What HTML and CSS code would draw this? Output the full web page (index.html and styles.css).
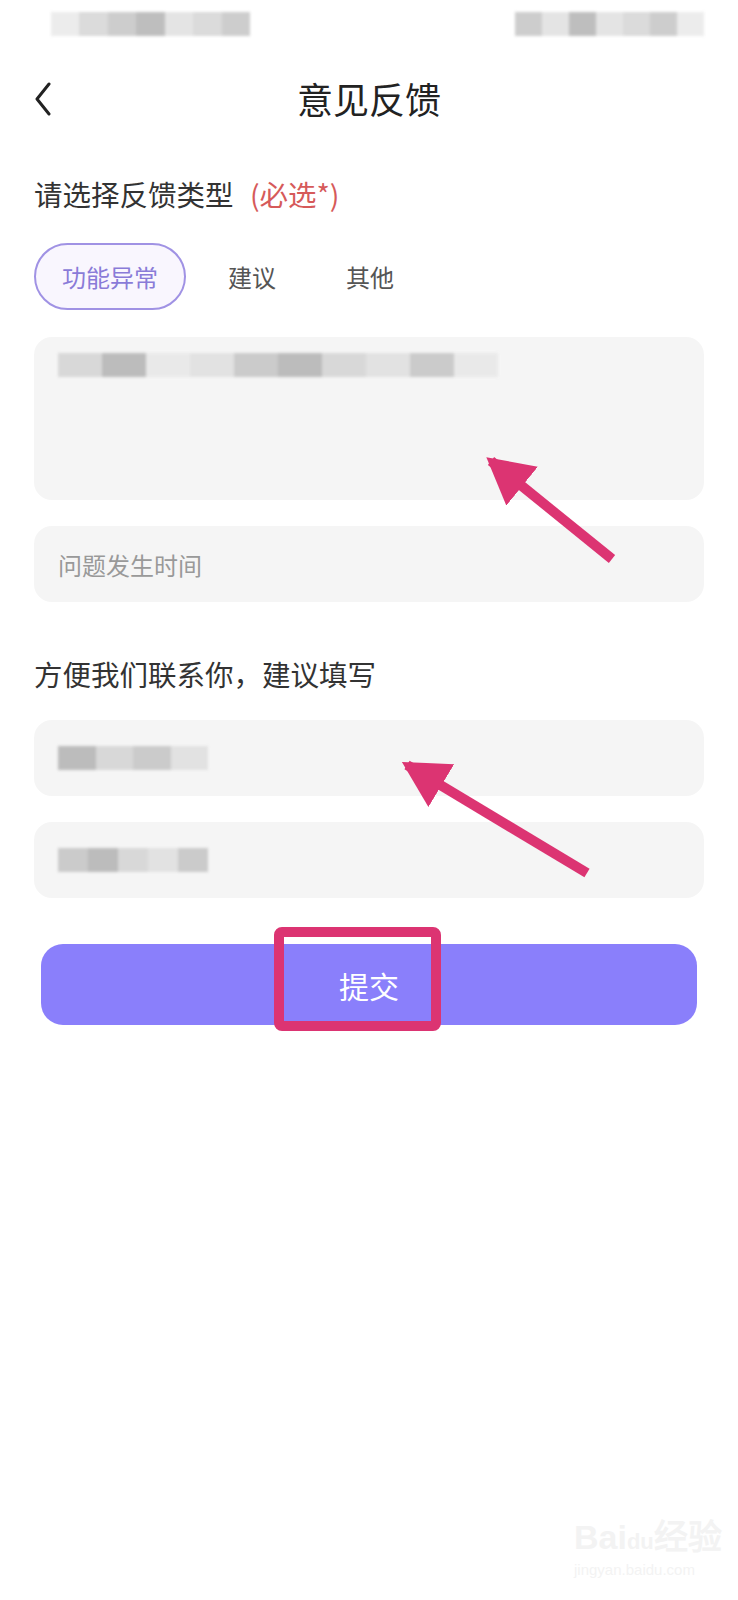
FILE: index.html
```html
<!DOCTYPE html>
<html lang="zh-CN">
<head>
    <meta charset="UTF-8">
    <meta name="viewport" content="width=device-width, initial-scale=1.0">
    <title>意见反馈</title>
    <link rel="stylesheet" href="styles.css">
</head>
<body>
    <div class="status-bar">
        <div class="mosaic mosaic-left">
            <span class="px p1"></span><span class="px p2"></span><span class="px p3"></span><span class="px p4"></span><span class="px p5"></span><span class="px p2"></span><span class="px p3"></span>
        </div>
        <div class="mosaic mosaic-right">
            <span class="px p3"></span><span class="px p5"></span><span class="px p4"></span><span class="px p5"></span><span class="px p2"></span><span class="px p3"></span><span class="px p1"></span>
        </div>
    </div>

    <div class="nav">
        <svg class="back" width="20" height="34" viewBox="0 0 20 34">
            <path d="M16 2 L4 17 L16 32" fill="none" stroke="#222" stroke-width="3" stroke-linecap="round" stroke-linejoin="round"/>
        </svg>
        <h1 class="nav-title">意见反馈</h1>
    </div>

    <div class="page">
        <div class="section-title">请选择反馈类型 <span class="required">(必选*)</span></div>

        <div class="chips">
            <span class="chip active">功能异常</span>
            <span class="chip">建议</span>
            <span class="chip">其他</span>
        </div>

        <div class="field field-area">
            <div class="mosaic mosaic-text">
                <span class="px p2"></span><span class="px p4"></span><span class="px p1"></span><span class="px p5"></span><span class="px p3"></span><span class="px p4"></span><span class="px p2"></span><span class="px p5"></span><span class="px p3"></span><span class="px p1"></span>
            </div>
        </div>

        <div class="field">
            <span class="placeholder">问题发生时间</span>
        </div>

        <div class="section-title contact-title">方便我们联系你，建议填写</div>

        <div class="field">
            <div class="mosaic mosaic-short">
                <span class="px p4"></span><span class="px p2"></span><span class="px p3"></span><span class="px p5"></span>
            </div>
        </div>

        <div class="field">
            <div class="mosaic mosaic-short">
                <span class="px p3"></span><span class="px p4"></span><span class="px p2"></span><span class="px p5"></span><span class="px p3"></span>
            </div>
        </div>

        <button class="submit">提交</button>
    </div>

    <!-- annotation overlay -->
    <svg class="marks" width="738" height="1100" viewBox="0 0 738 1100">
        <defs>
            <marker id="head" markerWidth="5" markerHeight="5" refX="4" refY="2.5" orient="auto" markerUnits="strokeWidth">
                <path d="M0 0 L4.6 2.5 L0 5 Z" fill="#dc3472"/>
            </marker>
        </defs>
        <line x1="612" y1="559" x2="491" y2="461" stroke="#dc3472" stroke-width="10" marker-end="url(#head)"/>
        <line x1="587" y1="873" x2="407" y2="765" stroke="#dc3472" stroke-width="10" marker-end="url(#head)"/>
        <rect x="279" y="932" width="157" height="94" rx="3" fill="none" stroke="#dc3472" stroke-width="10"/>
    </svg>

    <div class="watermark">
        <div class="wm-logo">Bai<span class="wm-du">du</span>经验</div>
        <div class="wm-url">jingyan.baidu.com</div>
    </div>
</body>
</html>
```

FILE: styles.css
```css
body {
    margin: 0;
    background: #fff;
    font-family: "Noto Sans CJK SC", "Noto Sans", sans-serif;
    color: #333;
    position: relative;
    min-height: 1600px;
}

.status-bar {
    height: 48px;
    display: flex;
    justify-content: space-between;
    align-items: flex-start;
    padding: 12px 34px 0 51px;
    box-sizing: border-box;
}

.mosaic {
    display: flex;
    filter: blur(1.5px);
    opacity: 0.75;
}

.px {
    display: block;
    height: 24px;
    flex: 1;
}

.p1 { background: #e6e6e6; }
.p2 { background: #cfcfcf; }
.p3 { background: #bdbdbd; }
.p4 { background: #a9a9a9; }
.p5 { background: #dcdcdc; }

.mosaic-left {
    width: 199px;
}

.mosaic-right {
    width: 189px;
}

.nav {
    height: 100px;
    display: flex;
    align-items: center;
    justify-content: center;
    position: relative;
}

.back {
    position: absolute;
    left: 33px;
    top: 34px;
}

.nav-title {
    margin: 0;
    font-size: 36px;
    font-weight: 400;
    color: #222;
}

.page {
    padding: 0 34px;
    display: flex;
    flex-direction: column;
}

.section-title {
    margin-top: 26px;
    font-size: 28.5px;
    line-height: 40px;
    color: #333;
}

.required {
    color: #d65a5a;
    margin-left: 10px;
}

.contact-title {
    margin-top: 52px;
}

.chips {
    margin-top: 29px;
    display: flex;
    gap: 14px;
}

.chip {
    height: 67px;
    box-sizing: border-box;
    padding: 0 26px;
    border: 2px solid transparent;
    border-radius: 34px;
    display: flex;
    align-items: center;
    font-size: 24px;
    color: #555;
}

.chip.active {
    border-color: #a092e4;
    background: #f9f6fe;
    color: #8a7bd8;
}

.field {
    margin-top: 26px;
    height: 76px;
    background: #f5f5f5;
    border-radius: 18px;
    display: flex;
    align-items: center;
    padding: 0 24px;
}

.field-area {
    margin-top: 27px;
    height: 163px;
    align-items: flex-start;
    padding-top: 16px;
    box-sizing: border-box;
}

.mosaic-text {
    width: 440px;
}

.mosaic-short {
    width: 150px;
}

.placeholder {
    font-size: 24px;
    color: #999;
}

.submit {
    margin: 46px 7px 0;
    height: 81px;
    border: none;
    border-radius: 22px;
    background: #8a7ffb;
    color: #fff;
    font-family: inherit;
    font-size: 30px;
}

.marks {
    position: absolute;
    left: 0;
    top: 0;
    pointer-events: none;
}

.watermark {
    position: absolute;
    left: 574px;
    top: 1518px;
    color: #f3f3f3;
    font-family: "Liberation Sans", sans-serif;
}

.wm-logo {
    font-size: 34px;
    font-weight: bold;
    line-height: 38px;
}

.wm-du {
    font-size: 22px;
}

.wm-url {
    font-size: 15px;
    line-height: 18px;
}
```
